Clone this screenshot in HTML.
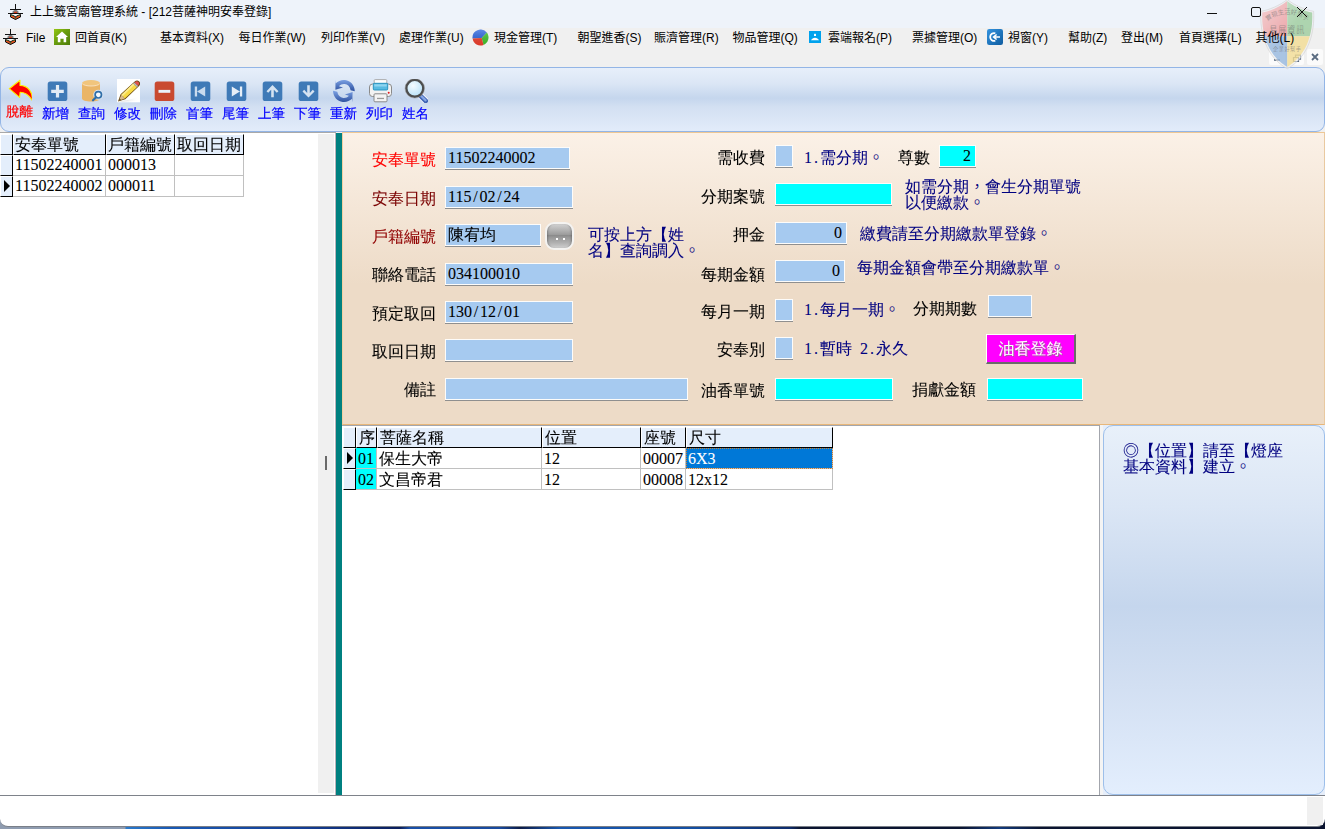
<!DOCTYPE html>
<html lang="zh-Hant">
<head>
<meta charset="utf-8">
<title>上上籤宮廟管理系統</title>
<style>
*{box-sizing:border-box;margin:0;padding:0}
html,body{width:1325px;height:829px;overflow:hidden;background:#f0f0f0}
body{position:relative;font-family:"Liberation Sans","Noto Sans CJK TC","Noto Sans CJK SC",sans-serif;color:#000}
.abs{position:absolute}
.ui{font-family:"Liberation Sans","Noto Sans CJK TC","Noto Sans CJK SC",sans-serif;font-size:12px;line-height:16px;white-space:nowrap;color:#000}
.ming{font-family:"Liberation Serif","WenQuanYi Zen Hei","Noto Serif CJK SC",serif;white-space:nowrap;-webkit-text-stroke:0.08px currentColor}
.p{font-family:"Noto Sans CJK TC","Noto Sans CJK SC",sans-serif;font-weight:300;line-height:0}
#titlebar{left:0;top:0;width:1325px;height:28px;background:#eef3fa}
#menubar{left:0;top:28px;width:1325px;height:39px;background:#f0f0f0}
.mi{position:absolute;z-index:3;top:29px;height:18px;line-height:18px;font-size:12px;white-space:nowrap}
#toolbar{left:0;top:67px;width:1325px;height:65px;border:1px solid #93b5e6;border-radius:9px;
 background:linear-gradient(to bottom,#e7effa 0%,#dbe6f5 25%,#c5d6ed 48%,#d3e0f2 62%,#e2ecfa 100%)}
.tb{-webkit-text-stroke:0.2px currentColor;position:absolute;top:107px;width:36px;text-align:left;font-size:13.500px;line-height:14px;color:#0000ff}
.ico{position:absolute}
#left{left:0;top:132px;width:336px;height:663px;background:#fff;border-top:1px solid #a9a9a9}
#split{left:318px;top:134px;width:16px;height:659px;background:#f0f0f0}
#teal{left:335px;top:133px;width:7px;height:662px;background:#008080;border-left:1px solid #b9b3ba}
#form{left:342px;top:132px;width:983px;height:293px;background:linear-gradient(to bottom,#fbf1e7 0%,#eddbc7 52%,#eddbc7 100%);border-top:1px solid #eec794;border-left:1px solid #f3cf9f;border-right:1px solid #e9c9a0;border-bottom:1px solid #e8b77a}
#gridarea{left:342px;top:425px;width:758px;height:370px;background:#fff;border-top:1px solid #a3a6ad;border-right:1px solid #a3a6ad}
#gstrip{left:1100px;top:425px;width:225px;height:370px;background:linear-gradient(to right,#f4f4f4 0,#f4f4f4 3px,#e6eefa 3px)}
#info{left:1103px;top:425px;width:222px;height:370px;border:1px solid #9dbfea;border-radius:10px;background:linear-gradient(to bottom,#e8f0fa 0%,#dbe6f5 22%,#c5d6ed 49%,#d2dff2 70%,#e3eefd 100%)}
#status{left:0;top:795px;width:1325px;height:32px;background:#fff;border-top:1px solid #7e828a;border-bottom:1px solid #7a7f88;border-radius:0 0 8px 8px}
#desk{left:0;top:795px;width:1325px;height:34px;background:linear-gradient(to right,#8f9cb0 0,#8f9cb0 125px,#2a7acc 126px,#1a5ab4 170px,#143f96 300px,#0a1e5c 400px,#1a50a8 410px,#184a9e 500px,#0c1c48 520px,#1858b0 560px,#1450a4 690px,#0e2c6c 790px,#0a1430 800px,#0a1430 960px,#123a7c 1000px,#0a1430 1040px,#0a1430 100%)}
.lbl{position:absolute;font-size:16px;line-height:18px;height:18px;text-align:right}
.inp{position:absolute;height:22px;background:#a6caf0;border:1px solid #fdfcfa;box-shadow:0 1px 0 #8f8f8f;font-size:16px;line-height:20px;padding-left:2px}
.cy{background:#00ffff}
.note{position:absolute;font-size:16px;line-height:16px;color:#000080}
.gh{position:absolute;background:#e4eefb;border-right:1px solid #000;border-bottom:1px solid #000;border-top:1px solid #fff;border-left:1px solid #fff;font-size:16px;line-height:19px;height:21px;padding-left:1px;overflow:hidden}
.gc{position:absolute;background:#fff;border-right:1px solid #c0c0c0;border-bottom:1px solid #c0c0c0;font-size:16px;line-height:20px;height:21px;padding-left:2px;overflow:hidden}
.gi{position:absolute;background:#e4eefb;border-right:1px solid #000;border-bottom:1px solid #000;border-top:1px solid #fff;border-left:1px solid #fff;height:21px}
.tri{position:absolute;width:0;height:0;border-top:6px solid transparent;border-bottom:6px solid transparent;border-left:6px solid #000}
.h{display:inline-block;width:8px;text-align:center}
</style>
</head>
<body>
<div class="abs" id="titlebar"></div>
<div class="abs" id="menubar"></div>
<svg class="ico" style="left:8px;top:4px" width="15" height="16" viewBox="0 0 15 16"><path d="M7.500 0v5" stroke="#111" stroke-width="1"/><path d="M4.500 9.500V7.500Q7.500 4 10.500 7.500V9.500z" fill="#7c7c7c"/><path d="M2 5.500h11" stroke="#111" stroke-width="1"/><path d="M6 7.800h3v1.400h-3z" fill="#d8401c"/><path d="M2.500 10.500v2.500L7.500 15.500l5-2.500v-2.500L7.500 12.500z" fill="#e4531e" stroke="#111" stroke-width="1" stroke-linejoin="round"/><path d="M3 9.500L7.500 12l4.500-2.500z" fill="#f4f4f4"/><path d="M0 9.500h15" stroke="#111" stroke-width="1"/><rect x="6.800" y="12.800" width="1.400" height="1.700" fill="#2c6a3a"/><rect x="3.500" y="10.800" width="1.200" height="1" fill="#2c8a3a"/><rect x="10.300" y="10.800" width="1.200" height="1" fill="#2c8a3a"/><path d="M7.500 15.500v.5" stroke="#111" stroke-width="1.200"/></svg>
<div class="abs ui" style="left:30px;top:4px">上上籤宮廟管理系統 - [212菩薩神明安奉登錄]</div>
<svg class="ico" style="left:1201px;top:.5px;z-index:3" width="125" height="28" viewBox="0 0 125 28"><path d="M6 12.500h10" stroke="#111" stroke-width="1"/><rect x="50.500" y="6.500" width="9" height="9" rx="1.500" fill="none" stroke="#111" stroke-width="1"/><path d="M96 6l10 10M106 6l-10 10" stroke="#111" stroke-width="1"/></svg>
<svg class="ico" style="left:3px;top:29px" width="15" height="16" viewBox="0 0 15 16"><path d="M7.500 0v5" stroke="#111" stroke-width="1"/><path d="M4.500 9.500V7.500Q7.500 4 10.500 7.500V9.500z" fill="#7c7c7c"/><path d="M2 5.500h11" stroke="#111" stroke-width="1"/><path d="M6 7.800h3v1.400h-3z" fill="#d8401c"/><path d="M2.500 10.500v2.500L7.500 15.500l5-2.500v-2.500L7.500 12.500z" fill="#e4531e" stroke="#111" stroke-width="1" stroke-linejoin="round"/><path d="M3 9.500L7.500 12l4.500-2.500z" fill="#f4f4f4"/><path d="M0 9.500h15" stroke="#111" stroke-width="1"/><rect x="6.800" y="12.800" width="1.400" height="1.700" fill="#2c6a3a"/><rect x="3.500" y="10.800" width="1.200" height="1" fill="#2c8a3a"/><rect x="10.300" y="10.800" width="1.200" height="1" fill="#2c8a3a"/><path d="M7.500 15.500v.5" stroke="#111" stroke-width="1.200"/></svg>
<div class="mi" style="left:26px">File</div>
<div class="mi" style="left:75px">回首頁(K)</div>
<div class="mi" style="left:160px">基本資料(X)</div>
<div class="mi" style="left:238.5px">每日作業(W)</div>
<div class="mi" style="left:321px">列印作業(V)</div>
<div class="mi" style="left:399px">處理作業(U)</div>
<div class="mi" style="left:494px">現金管理(T)</div>
<div class="mi" style="left:577.5px">朝聖進香(S)</div>
<div class="mi" style="left:654px">賑濟管理(R)</div>
<div class="mi" style="left:732.5px">物品管理(Q)</div>
<div class="mi" style="left:828px">雲端報名(P)</div>
<div class="mi" style="left:912px">票據管理(O)</div>
<div class="mi" style="left:1008px">視窗(Y)</div>
<div class="mi" style="left:1068px">幫助(Z)</div>
<div class="mi" style="left:1121px">登出(M)</div>
<div class="mi" style="left:1179px">首頁選擇(L)</div>
<div class="mi" style="left:1255.5px">其他(L)</div>
<svg class="ico" style="left:54px;top:29px" width="16" height="16" viewBox="0 0 16 16"><defs><linearGradient id="hg" x1="0" y1="0" x2="1" y2="1"><stop offset="0" stop-color="#93c712"/><stop offset=".45" stop-color="#6a9e0e"/><stop offset="1" stop-color="#4d7c0a"/></linearGradient></defs><rect width="16" height="16" fill="url(#hg)"/><path d="M8 2.500l6 5.500h-1.800v5.200H9.600V9.800H6.400v3.400H3.800V8H2z" fill="#fff"/></svg>
<svg class="ico" style="left:472px;top:29px" width="17" height="17" viewBox="0 0 17 17"><defs><linearGradient id="pg" x1="0" y1="0" x2="0" y2="1"><stop offset="0" stop-color="#fff" stop-opacity=".25"/><stop offset="1" stop-color="#000" stop-opacity=".08"/></linearGradient></defs><path d="M9.700 9.100L.6 9.600A8 8 0 0 1 14.800 3.600z" fill="#2d66e0"/><path d="M9.700 9.100L14.800 3.600A8 8 0 0 1 11.500 15.900z" fill="#44c62e"/><path d="M9.700 9.100L11.500 15.900A8 8 0 0 1 .6 9.600z" fill="#f1402e"/><circle cx="8.500" cy="8.500" r="8" fill="url(#pg)"/></svg>
<svg class="ico" style="left:809px;top:31px" width="12" height="12" viewBox="0 0 12 12"><rect width="12" height="12" fill="#00a2ed"/><rect x="5" y="2.800" width="2" height="2.200" rx=".5" fill="#fff"/><path d="M2 9.300C3 7.800 4 6.800 6 6.800s3 1 4 2.500z" fill="#fff"/></svg>
<svg class="ico" style="left:987px;top:29px" width="16" height="16" viewBox="0 0 16 16"><defs><linearGradient id="wg" x1="0" y1="0" x2="1" y2="1"><stop offset="0" stop-color="#3393df"/><stop offset="1" stop-color="#0f5c9f"/></linearGradient></defs><rect width="16" height="16" rx="2.200" fill="url(#wg)"/><path d="M8.300 4.300A3.900 3.900 0 1 0 8.300 11.700" fill="none" stroke="#fff" stroke-width="1.800"/><path d="M7 8h6M9.600 5.500L6.600 8l3 2.500" fill="none" stroke="#fff" stroke-width="1.600"/></svg>
<div class="abs" style="left:1269px;top:49px;width:16px;height:16px;background:#fbfbfb;border-radius:2px"></div>
<div class="abs" style="left:1288px;top:49px;width:16px;height:16px;background:#fbfbfb;border-radius:2px"></div>
<div class="abs" style="left:1307px;top:49px;width:16px;height:16px;background:#fbfbfb;border-radius:2px"></div>
<svg class="ico" style="left:1269px;top:49px" width="54" height="16" viewBox="0 0 54 16"><path d="M5 11h6" stroke="#5a6b80" stroke-width="1.600"/><path d="M24.500 8.500h5v4h-5zM26.500 8V6.200h5v4H30" fill="none" stroke="#5a6b80" stroke-width="1.200"/><path d="M43 5l6 6M49 5l-6 6" stroke="#5a6b80" stroke-width="1.800"/></svg>
<div class="abs" id="toolbar"></div>
<svg class="ico" style="left:1257.500px;top:-1px;z-index:2" width="58.500" height="70.500" viewBox="0 0 62 70" preserveAspectRatio="none">
<defs><clipPath id="shc"><path d="M31 2C23 8 13 12 4.500 13.500 3.500 34 10 56 31 67.500 52 56 58.500 34 57.500 13.500 49 12 39 8 31 2z"/></clipPath>
<linearGradient id="shg" x1="0" y1="0" x2="1" y2="1"><stop offset="0" stop-color="#fff" stop-opacity=".55"/><stop offset=".5" stop-color="#fff" stop-opacity="0"/></linearGradient></defs>
<path d="M31 .5C23 6.500 12 10.800 3 12.200 1.800 34 8.500 57.500 31 69.300 53.500 57.500 60.200 34 59 12.200 50 10.800 39 6.500 31 .5z" fill="#ececec" fill-opacity=".6" stroke="#d2d2d2" stroke-opacity=".8" stroke-width=".8"/>
<g clip-path="url(#shc)" opacity=".55"><rect x="0" y="0" width="31" height="37" fill="#ee6f73"/><rect x="31" y="0" width="31" height="37" fill="#79bd78"/><rect x="0" y="37" width="31" height="33" fill="#6d9fd8"/><rect x="31" y="37" width="31" height="33" fill="#f6d66b"/><rect x="0" y="0" width="62" height="70" fill="url(#shg)"/></g>
<path id="sharc" d="M8 24C20 12 42 12 54 24" fill="none"/>
<g font-family="'Liberation Sans','Noto Sans CJK TC','Noto Sans CJK SC',sans-serif" fill="#6b6b6b" fill-opacity=".55" text-anchor="middle">
<text font-size="6.500"><textPath href="#sharc" startOffset="50%">實現生活好幫手</textPath></text>
<text x="31" y="34" font-size="8.500" letter-spacing="1">易展資訊</text>
<text x="31" y="52" font-size="5.500" letter-spacing=".5">企業好幫手</text></g>
</svg>
<svg class="ico" style="left:8px;top:79px" width="24" height="24" viewBox="0 0 24 24"><path d="M12 1.200L1.300 9.700l10.300 8.600.5-5c4.600 0 8.600 2.300 12.400 8.500.6-8.400-4.300-15.100-12.500-15.400z" fill="#ff0000" stroke="#ffee00" stroke-width="1.100" stroke-linejoin="round"/></svg>
<svg class="ico" style="left:44px;top:79px" width="24" height="24" viewBox="0 0 24 24"><rect x="3.700" y="2.500" width="19.600" height="19.600" rx="2.600" fill="#3f7ab7"/><path d="M13.500 6v12.600M7.200 12.300h12.600" stroke="#e3ecf5" stroke-width="3.200"/></svg>
<svg class="ico" style="left:80px;top:79px" width="24" height="24" viewBox="0 0 24 24"><path d="M2 4v15.500c0 1.700 4 3 9 3s9-1.300 9-3V4z" fill="#eab567"/><ellipse cx="11" cy="4" rx="9" ry="3" fill="#f1c57d"/><path d="M2.200 4.600c1 1.500 4.600 2.400 8.800 2.400s7.800-.9 8.800-2.400" fill="none" stroke="#fbe9cf" stroke-width=".8"/><circle cx="18.300" cy="15.800" r="4.300" fill="#eef4fa" stroke="#dbe6f3" stroke-width="1.500"/><circle cx="18.300" cy="15.800" r="3.200" fill="#f4f8fc" stroke="#2f6ea8" stroke-width="1.700"/><path d="M16 18.300l-3 3" stroke="#2f6ea8" stroke-width="2.200" stroke-linecap="round"/></svg>
<svg class="ico" style="left:116px;top:79px" width="24" height="24" viewBox="0 0 24 24"><defs><linearGradient id="psh" x1="0" y1="0" x2="1" y2="0"><stop offset="0" stop-color="#9a9a9a"/><stop offset="1" stop-color="#fff" stop-opacity="0"/></linearGradient></defs><rect x="1" y="0" width="24" height="23.300" fill="#fff"/><path d="M3 22.300c6-.3 14-2 20-5l.5 4.500c-6 .8-14 1-20.500.5z" fill="url(#psh)" opacity=".6"/><path d="M2 22.500l2.600-7.300L18.700 2.600c1.300-1.300 3.300-1.300 4.500-.1 1.300 1.300 1.200 3.200-.1 4.500L9.300 20.300z" fill="#6b4a12"/><path d="M5.400 15.800L17.300 4.600l3.600 3.600L8.800 19.400z" fill="#f8da45"/><path d="M5.400 15.800L17.300 4.600l1.200 1.200L6.600 17.200z" fill="#fceb8c"/><path d="M17.300 4.600l1.300-1.200 3.600 3.600-1.300 1.200z" fill="#b9b9b9"/><path d="M18.600 3.400l.6-.5c.9-.9 2.300-.9 3.200 0s.9 2.300 0 3.200l-.4.500z" fill="#e2504c"/><path d="M2.800 21.800l2.600-6 3.400 3.600z" fill="#d9ba8c"/><path d="M2.800 21.800l.9-2.100 1.300 1.300z" fill="#4a3410"/></svg>
<svg class="ico" style="left:151px;top:79px" width="24" height="24" viewBox="0 0 24 24"><rect x="3.700" y="2.500" width="19.600" height="19.600" rx="2.600" fill="#c94a30"/><rect x="7.500" y="10.900" width="11.800" height="2.900" fill="#e9f2fb"/></svg>
<svg class="ico" style="left:187px;top:79px" width="24" height="24" viewBox="0 0 24 24"><rect x="3.700" y="2.500" width="19.600" height="19.600" rx="2.600" fill="#3f7ab7"/><path d="M7.800 7.500h2.300v10h-2.300zM18.200 7.500v10l-8.100-5z" fill="#c9dbee"/></svg>
<svg class="ico" style="left:223px;top:79px" width="24" height="24" viewBox="0 0 24 24"><rect x="3.700" y="2.500" width="19.600" height="19.600" rx="2.600" fill="#3f7ab7"/><path d="M19.200 7.500h-2.300v10h2.300zM8.800 7.500v10l8.100-5z" fill="#e6eef7"/></svg>
<svg class="ico" style="left:259px;top:79px" width="24" height="24" viewBox="0 0 24 24"><rect x="3.700" y="2.500" width="19.600" height="19.600" rx="2.600" fill="#3f7ab7"/><path d="M13.500 6l-6 6.200 1.700 1.600 3-3.100v7.600h2.600v-7.600l3 3.100 1.700-1.600z" fill="#d5e3f1"/></svg>
<svg class="ico" style="left:295px;top:79px" width="24" height="24" viewBox="0 0 24 24"><rect x="3.700" y="2.500" width="19.600" height="19.600" rx="2.600" fill="#3f7ab7"/><path d="M13.500 18.600l-6-6.200 1.700-1.600 3 3.100V6.300h2.600v7.600l3-3.100 1.700 1.600z" fill="#d5e3f1"/></svg>
<svg class="ico" style="left:332px;top:79px" width="24" height="24" viewBox="0 0 24 24"><defs><linearGradient id="rg" x1="0" y1="0" x2="0" y2="1"><stop offset="0" stop-color="#7da2e4"/><stop offset="1" stop-color="#2c4f9e"/></linearGradient></defs><path d="M3.500 0.800l.3 3.400C6 2 9.500.6 13 1c5.600.6 9.600 5.200 9.800 11.200l-4.200-1C18 7.600 15.800 5.300 12.600 5 10.300 4.800 8.300 5.700 7 7.200l4 1.300-7.600 2.300z" fill="url(#rg)"/><path d="M20.300 23.400l-.3-3.600c-2.200 2.200-5.600 3.600-9.200 3.200C5.200 22.400 1.300 17.800 1 11.800l4.300 1c.6 3.500 2.800 5.900 6 6.200 2.300.2 4.300-.7 5.600-2.200l-4-1.300 7.700-2.500z" fill="url(#rg)"/></svg>
<svg class="ico" style="left:368px;top:79px" width="24" height="24" viewBox="0 0 24 24"><rect x="6.200" y="0.600" width="12.600" height="6" rx="1" fill="#fdfdfd" stroke="#9a9a9a" stroke-width=".8"/><rect x="1.500" y="5" width="22" height="12.500" rx="3" fill="#f2f2f2" stroke="#8a8a8a" stroke-width="1"/><rect x="5.300" y="4.300" width="14.400" height="6.700" rx="1" fill="#58bbe2" stroke="#1f8fbd" stroke-width=".9"/><rect x="6.300" y="5.300" width="12.400" height="2.200" fill="#8fd5f0"/><circle cx="20.700" cy="13.700" r="1" fill="#e0181c"/><rect x="6" y="14.800" width="13" height="8" rx="1" fill="#f4f4f4" stroke="#8a8a8a" stroke-width="1"/><rect x="9" y="18.800" width="7" height="1.300" fill="#9a9a9a"/></svg>
<svg class="ico" style="left:404px;top:79px" width="24" height="24" viewBox="0 0 24 24"><defs><radialGradient id="mg" cx=".4" cy=".35" r=".7"><stop offset="0" stop-color="#f4fbff"/><stop offset="1" stop-color="#b5e0f8"/></radialGradient></defs><path d="M15.500 15.800l6.300 6.200" stroke="#fff" stroke-width="6.500" stroke-linecap="round" opacity=".8"/><path d="M16.500 16.800l5.300 5.200" stroke="#3f63b4" stroke-width="4.600" stroke-linecap="round"/><path d="M17.500 17.300l4 4" stroke="#86a8e6" stroke-width="2.300" stroke-linecap="round"/><circle cx="10.800" cy="9.300" r="8.500" fill="url(#mg)" stroke="#4d4d4d" stroke-width="2.400"/><circle cx="10.800" cy="9.300" r="9.800" fill="none" stroke="#9a9a9a" stroke-width=".5"/></svg>
<div class="tb ming" style="left:6px;color:#ff0000;top:105px">脫離</div>
<div class="tb ming" style="left:42px">新增</div>
<div class="tb ming" style="left:78px">查詢</div>
<div class="tb ming" style="left:114px">修改</div>
<div class="tb ming" style="left:150px">刪除</div>
<div class="tb ming" style="left:186px">首筆</div>
<div class="tb ming" style="left:222px">尾筆</div>
<div class="tb ming" style="left:258px">上筆</div>
<div class="tb ming" style="left:294px">下筆</div>
<div class="tb ming" style="left:330px">重新</div>
<div class="tb ming" style="left:366px">列印</div>
<div class="tb ming" style="left:402px">姓名</div>
<div class="abs" id="left"></div>
<div class="gh ming" style="left:0px;top:134px;width:13px"></div>
<div class="gh ming" style="left:13px;top:134px;width:93px">安奉單號</div>
<div class="gh ming" style="left:106px;top:134px;width:69px">戶籍編號</div>
<div class="gh ming" style="left:175px;top:134px;width:69px">取回日期</div>
<div class="gi" style="left:0;top:155px;width:13px"></div>
<div class="gc ming" style="left:13px;top:155px;width:93px">11502240001</div>
<div class="gc ming" style="left:106px;top:155px;width:69px">000013</div>
<div class="gc ming" style="left:175px;top:155px;width:69px"></div>
<div class="gi" style="left:0;top:176px;width:13px"></div>
<div class="gc ming" style="left:13px;top:176px;width:93px">11502240002</div>
<div class="gc ming" style="left:106px;top:176px;width:69px">000011</div>
<div class="gc ming" style="left:175px;top:176px;width:69px"></div>
<div class="tri" style="left:4px;top:180px"></div>
<div class="abs" id="split"></div>
<div class="abs" id="teal"></div>
<div class="abs" id="form"></div>
<div class="lbl ming" style="left:356px;width:80px;top:151px;color:#ff0000">安奉單號</div>
<div class="lbl ming" style="left:356px;width:80px;top:190px;color:#7a0000">安奉日期</div>
<div class="lbl ming" style="left:356px;width:80px;top:228px;color:#900000">戶籍編號</div>
<div class="lbl ming" style="left:356px;width:80px;top:266px;color:#000">聯絡電話</div>
<div class="lbl ming" style="left:356px;width:80px;top:305px;color:#000">預定取回</div>
<div class="lbl ming" style="left:356px;width:80px;top:343px;color:#000">取回日期</div>
<div class="lbl ming" style="left:356px;width:80px;top:381px;color:#000">備註</div>
<div class="inp ming" style="left:445px;top:147px;width:125px">11502240002</div>
<div class="inp ming" style="left:445px;top:186px;width:128px">115<span class="h">/</span>02<span class="h">/</span>24</div>
<div class="inp ming" style="left:445px;top:224px;width:96px">陳宥均</div>
<div class="inp ming" style="left:445px;top:263px;width:128px">034100010</div>
<div class="inp ming" style="left:445px;top:301px;width:128px">130<span class="h">/</span>12<span class="h">/</span>01</div>
<div class="inp ming" style="left:445px;top:339px;width:128px"></div>
<div class="inp ming" style="left:445px;top:378px;width:243px"></div>
<div class="abs" style="left:545px;top:222px;width:29px;height:28px;border-radius:9px;border:2px solid #f4f3f1;background:linear-gradient(to bottom,#d2d2d2 0%,#b4b4b4 25%,#9c9c9c 44%,#8c8c8c 48%,#999 56%,#b0b0b0 78%,#cfcfcf 100%);box-shadow:inset 2px 0 2px -1px rgba(60,60,60,.35),inset -2px 0 2px -1px rgba(60,60,60,.35)"></div><div class="abs" style="left:556px;top:238px;width:2px;height:2px;background:#fff"></div><div class="abs" style="left:563px;top:238px;width:2px;height:2px;background:#fff"></div>
<div class="note ming" style="left:588px;top:227px">可按上方【姓<br>名】查詢調入<span class="p">。</span></div>
<div class="lbl ming" style="left:685px;width:80px;top:149px">需收費</div>
<div class="lbl ming" style="left:685px;width:80px;top:188px">分期案號</div>
<div class="lbl ming" style="left:685px;width:80px;top:226px">押金</div>
<div class="lbl ming" style="left:685px;width:80px;top:266px">每期金額</div>
<div class="lbl ming" style="left:685px;width:80px;top:303px">每月一期</div>
<div class="lbl ming" style="left:685px;width:80px;top:341px">安奉別</div>
<div class="lbl ming" style="left:685px;width:80px;top:382px">油香單號</div>
<div class="inp ming " style="left:775px;top:145px;width:18px"></div>
<div class="inp ming cy" style="left:775px;top:183px;width:117px"></div>
<div class="inp ming " style="text-align:right;padding-right:4px;left:775px;top:222px;width:72px">0</div>
<div class="inp ming " style="text-align:right;padding-right:4px;left:775px;top:260px;width:70px">0</div>
<div class="inp ming " style="left:775px;top:299px;width:18px"></div>
<div class="inp ming " style="left:775px;top:337px;width:18px"></div>
<div class="inp ming cy" style="left:775px;top:378px;width:118px"></div>
<div class="inp ming cy" style="text-align:right;padding-right:4px;left:939px;top:145px;width:37px">2</div>
<div class="inp ming " style="left:988px;top:295px;width:44px"></div>
<div class="inp ming cy" style="left:987px;top:378px;width:96px"></div>
<div class="note ming" style="left:804px;top:150px">1<span class="h">.</span>需分期<span class="p">。</span></div>
<div class="note ming" style="left:898px;top:150px"><span style="color:#000">尊數</span></div>
<div class="note ming" style="left:905px;top:179px">如需分期<span class="p">，</span>會生分期單號<br>以便繳款<span class="p">。</span></div>
<div class="note ming" style="left:860px;top:226px">繳費請至分期繳款單登錄<span class="p">。</span></div>
<div class="note ming" style="left:857px;top:260px">每期金額會帶至分期繳款單<span class="p">。</span></div>
<div class="note ming" style="left:804px;top:302px">1<span class="h">.</span>每月一期<span class="p">。</span></div>
<div class="note ming" style="left:913px;top:301px"><span style="color:#000">分期期數</span></div>
<div class="note ming" style="left:804px;top:341px">1<span class="h">.</span>暫時<span class="h">&nbsp;</span>2<span class="h">.</span>永久</div>
<div class="note ming" style="left:912px;top:382px"><span style="color:#000">捐獻金額</span></div>
<div class="abs ming" style="left:986px;top:334px;width:90px;height:30px;background:#ff00ff;border-top:1px solid #fff;border-left:1px solid #fff;border-right:2px solid #6a6a6a;border-bottom:2px solid #6a6a6a;color:#fff;font-size:16px;line-height:27px;text-align:center;text-shadow:1px 1px 0 #9a6a9a">油香登錄</div>
<div class="abs" id="gridarea"></div>
<div class="gh ming" style="left:343px;top:427px;width:13px;height:21px;line-height:19px;padding-left:2px"></div>
<div class="gh ming" style="left:356px;top:427px;width:21px;height:21px;line-height:19px;padding-left:2px">序</div>
<div class="gh ming" style="left:377px;top:427px;width:165px;height:21px;line-height:19px;padding-left:2px">菩薩名稱</div>
<div class="gh ming" style="left:542px;top:427px;width:99px;height:21px;line-height:19px;padding-left:2px">位置</div>
<div class="gh ming" style="left:641px;top:427px;width:45px;height:21px;line-height:19px;padding-left:2px">座號</div>
<div class="gh ming" style="left:686px;top:427px;width:147px;height:21px;line-height:19px;padding-left:2px">尺寸</div>
<div class="gi" style="left:343px;top:448px;width:13px"></div>
<div class="gc ming" style="left:356px;top:448px;width:21px;line-height:22px;padding-left:2px;background:#00ffff;color:#000;padding-left:2px">01</div>
<div class="gc ming" style="left:377px;top:448px;width:165px;line-height:22px;padding-left:2px">保生大帝</div>
<div class="gc ming" style="left:542px;top:448px;width:99px;line-height:22px;padding-left:2px">12</div>
<div class="gc ming" style="left:641px;top:448px;width:45px;line-height:22px;padding-left:2px">00007</div>
<div class="gc ming" style="left:686px;top:448px;width:147px;line-height:22px;padding-left:2px;background:#0078d7;color:#fff;outline:1px dotted #d08030;outline-offset:-1px;padding-left:2px">6X3</div>
<div class="gi" style="left:343px;top:469px;width:13px"></div>
<div class="gc ming" style="left:356px;top:469px;width:21px;line-height:22px;padding-left:2px;background:#00ffff;color:#000;padding-left:2px">02</div>
<div class="gc ming" style="left:377px;top:469px;width:165px;line-height:22px;padding-left:2px">文昌帝君</div>
<div class="gc ming" style="left:542px;top:469px;width:99px;line-height:22px;padding-left:2px">12</div>
<div class="gc ming" style="left:641px;top:469px;width:45px;line-height:22px;padding-left:2px">00008</div>
<div class="gc ming" style="left:686px;top:469px;width:147px;line-height:22px;padding-left:2px">12x12</div>
<div class="tri" style="left:347px;top:452px"></div>
<div class="abs" style="left:325px;top:456px;width:2px;height:14px;background:#6a6a6a"></div>
<div class="abs" id="gstrip"></div>
<div class="abs" id="info"></div>
<div class="note ming" style="left:1123px;top:443px">◎【位置】請至【燈座<br>基本資料】建立<span class="p">。</span></div>
<div class="abs" id="desk"></div>
<div class="abs" id="status"></div>
<div class="abs" style="left:1307px;top:797px;width:16px;height:28px;background:#f0f0f0"></div>
</body>
</html>
